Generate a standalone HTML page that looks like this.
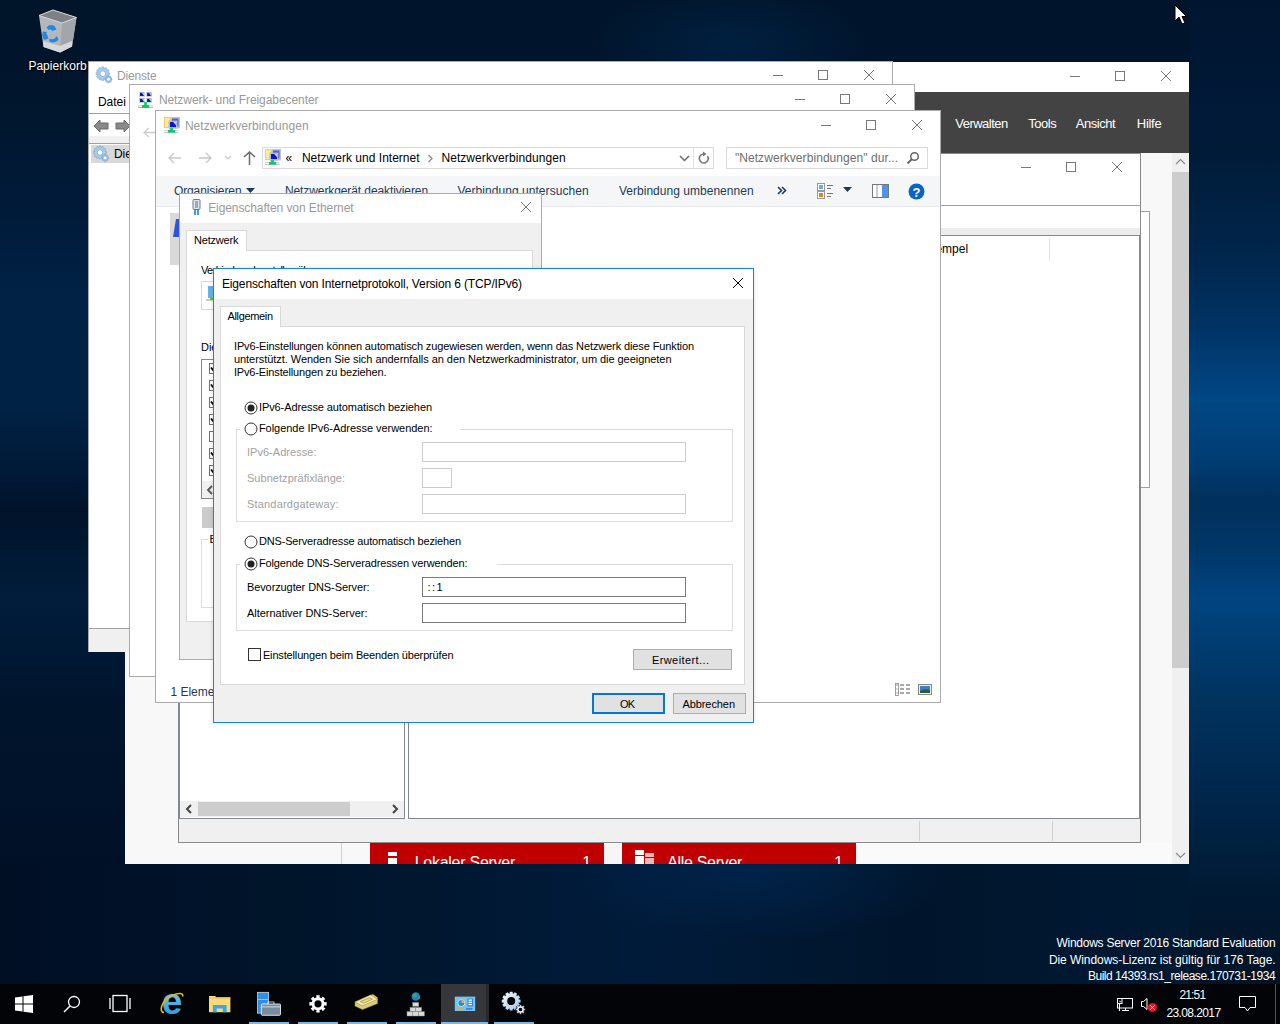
<!DOCTYPE html>
<html><head><meta charset="utf-8"><style>
html,body{margin:0;padding:0;width:1280px;height:1024px;overflow:hidden;}
body{position:relative;font-family:"Liberation Sans",sans-serif;}
body div, body span.t, body svg{position:absolute;box-sizing:border-box;}
span.t{white-space:nowrap;line-height:1;}

</style></head><body>
<div style="left:0;top:0;width:1280px;height:1024px;background:radial-gradient(ellipse 140px 60px at 730px 45px, rgba(0,34,68,0.85), rgba(0,34,68,0) 100%),#00152b"></div>
<div style="left:0;top:0;width:125px;height:984px;background:linear-gradient(180deg,#00142a 0px,#00162d 100px,#001a38 200px,#012246 300px,#002244 410px,#001a38 470px,#00132a 510px,#001d3c 600px,#00152d 700px,#001128 850px,#000d20 950px,#000d20 984px)"></div>
<div style="left:1189px;top:0;width:91px;height:984px;background:linear-gradient(180deg,#001530 0px,#001b39 150px,#00254a 250px,#003466 330px,#004886 400px,#003d73 460px,#00305c 500px,#003565 540px,#00447f 600px,#00335f 700px,#00274d 790px,#001a33 890px,#001428 984px)"></div>
<div style="left:0px;top:864px;width:1189px;height:120px;background:radial-gradient(ellipse 200px 70px at 750px 8px, rgba(0,36,76,0.9), rgba(0,36,76,0) 100%),linear-gradient(90deg,#000f24 0px,#001128 125px,#00152b 310px,#001b3a 640px,#00152b 910px,#001832 1100px,#001a33 1189px)"></div>
<svg style="left:36px;top:8px" width="44" height="46" viewBox="0 0 44 46">
<path d="M3 7.5 L7.5 39 L24 44.5 L36 38.5 L40.5 9.5 L26 15 Z" fill="#b4b8bc"/>
<path d="M26 15 L24 44.5 L36 38.5 L40.5 9.5 Z" fill="#a2a6aa"/>
<path d="M7 33 L24 38 L36 33 L36 38.5 L24 44.5 L7.5 39 Z" fill="#d6d8da"/>
<path d="M3 7.5 L17 2 L40.5 9.5 L26 15 Z" fill="#7d8185" stroke="#d8dcdf" stroke-width="1"/>
<path d="M10.5 19.5 q3.5 -4 8 -1.5 l2 3.5 l-4 1.5 q-1.5 -2.5 -3.5 -1 z M7 23.5 q-2 5 1.5 8.5 l4 -1.5 l-1.5 -4 q-1 -1 0 -2.5 z M13.5 33.5 q5 2.5 9 -1.5 l-1.5 -4 l-2.5 2.5 q-2.5 1.5 -5 0 z" fill="#1e88e5"/>
</svg>
<span class="t" style="left:28.40px;top:60.28px;font-size:12px;color:#fff;letter-spacing:0.019px;text-shadow:0 0 2px #000,1px 1px 1px #000;">Papierkorb</span>
<span class="t" style="left:1056.40px;top:937.28px;font-size:12px;color:#fff;letter-spacing:-0.253px;">Windows Server 2016 Standard Evaluation</span>
<span class="t" style="left:1048.90px;top:954.28px;font-size:12px;color:#fff;letter-spacing:-0.060px;">Die Windows-Lizenz ist gültig für 176 Tage.</span>
<span class="t" style="left:1087.90px;top:970.28px;font-size:12px;color:#fff;letter-spacing:-0.465px;">Build 14393.rs1_release.170731-1934</span>
<div style="left:0;top:0;width:1280px;height:864px;overflow:hidden">
<div style="left:125px;top:62px;width:1064px;height:802px;background:#f8f8f8;"></div>
<div style="left:125px;top:62px;width:1064px;height:30px;background:#fff;"></div>
<div style="left:1070px;top:76px;width:10px;height:1px;background:#777;"></div>
<div style="left:1115px;top:71px;width:10px;height:10px;border:1px solid #777;"></div>
<svg style="left:1160.0px;top:70.0px" width="12" height="12"><path d="M1 1 L11 11 M11 1 L1 11" stroke="#777" stroke-width="1"/></svg>
<div style="left:125px;top:92px;width:1064px;height:61px;background:#434343;"></div>
<span class="t" style="left:955.35px;top:117.02px;font-size:13px;color:#fff;letter-spacing:-0.537px;">Verwalten</span>
<span class="t" style="left:1028.35px;top:117.02px;font-size:13px;color:#fff;letter-spacing:-0.515px;">Tools</span>
<span class="t" style="left:1075.85px;top:117.02px;font-size:13px;color:#fff;letter-spacing:-0.473px;">Ansicht</span>
<span class="t" style="left:1136.85px;top:117.02px;font-size:13px;color:#fff;letter-spacing:-0.304px;">Hilfe</span>
<div style="left:1172px;top:153px;width:17px;height:711px;background:#f0f0f0;"></div>
<div style="left:1172px;top:172px;width:17px;height:496px;background:#cdcdcd;"></div>
<svg style="left:1175px;top:158px" width="11" height="8"><path d="M1 6 L5.5 1.5 L10 6" stroke="#888" fill="none" stroke-width="1.2"/></svg>
<svg style="left:1175px;top:851px" width="11" height="8"><path d="M1 2 L5.5 6.5 L10 2" stroke="#888" fill="none" stroke-width="1.2"/></svg>
<div style="left:1100px;top:211px;width:50px;height:277px;background:#fff;border:1px solid #a0a0a0;"></div>
<div style="left:341px;top:842px;width:1px;height:22px;background:#d0d0d0;"></div>
<div style="left:603px;top:842px;width:19px;height:22px;background:#f6f6f6;"></div>
<div style="left:855px;top:842px;width:317px;height:22px;background:#fafafa;"></div>
<div style="left:370px;top:842px;width:233.5px;height:22px;background:#c00000;"></div>
<div style="left:622px;top:842px;width:233.5px;height:22px;background:#c00000;"></div>
<div style="left:388px;top:852px;width:9px;height:4px;background:#fff;"></div>
<div style="left:388px;top:858px;width:9px;height:6px;background:#fff;"></div>
<div style="left:635px;top:850px;width:9px;height:5px;background:#fff;"></div>
<div style="left:635px;top:856px;width:9px;height:8px;background:#fff;"></div>
<div style="left:645px;top:853px;width:9px;height:4px;background:#f4b5b5;"></div>
<div style="left:645px;top:858px;width:9px;height:6px;background:#f4b5b5;"></div>
<span class="t" style="left:414.70px;top:855.04px;font-size:16px;color:#fff;letter-spacing:-0.265px;">Lokaler Server</span>
<span class="t" style="left:582.20px;top:855.04px;font-size:16px;color:#fff;">1</span>
<span class="t" style="left:667.20px;top:855.04px;font-size:16px;color:#fff;letter-spacing:-0.315px;">Alle Server</span>
<span class="t" style="left:834.20px;top:855.04px;font-size:16px;color:#fff;">1</span>
</div>
<div style="left:178px;top:153px;width:963px;height:690px;background:#fff;border:1px solid #8a8a8a;"></div>
<div style="left:1021px;top:167px;width:10px;height:1px;background:#777;"></div>
<div style="left:1066px;top:162px;width:10px;height:10px;border:1px solid #777;"></div>
<svg style="left:1111.0px;top:161.0px" width="12" height="12"><path d="M1 1 L11 11 M11 1 L1 11" stroke="#777" stroke-width="1"/></svg>
<div style="left:178px;top:205px;width:963px;height:1px;background:#a0a0a0;"></div>
<div style="left:179px;top:228px;width:961px;height:7px;background:#ececec;"></div>
<div style="left:178px;top:235px;width:227px;height:584px;background:#fff;border:1px solid #828790;border-left-width:2px;"></div>
<div style="left:180px;top:801px;width:224px;height:16px;background:#f0f0f0;"></div>
<div style="left:198px;top:802px;width:152px;height:14px;background:#cdcdcd;"></div>
<svg style="left:185px;top:804px" width="8" height="10"><path d="M6 1 L2 5 L6 9" stroke="#444" fill="none" stroke-width="2"/></svg>
<svg style="left:391px;top:804px" width="8" height="10"><path d="M2 1 L6 5 L2 9" stroke="#444" fill="none" stroke-width="2"/></svg>
<div style="left:408px;top:235px;width:732px;height:584px;background:#fff;border:1px solid #828790;"></div>
<div style="left:1049px;top:238px;width:1px;height:23px;background:#e5e5e5;"></div>
<span class="t" style="left:921.40px;top:243.28px;font-size:12px;color:#000;">Exempel</span>
<div style="left:179px;top:819px;width:961px;height:23px;background:#f0f0f0;"></div>
<div style="left:919px;top:821px;width:1px;height:20px;background:#d0d0d0;"></div>
<div style="left:1052px;top:821px;width:1px;height:20px;background:#d0d0d0;"></div>
<div style="left:88px;top:61px;width:805px;height:591px;background:#fff;border:1px solid #aaaaaa;"></div>
<span class="t" style="left:116.90px;top:69.78px;font-size:12px;color:#999;letter-spacing:-0.165px;">Dienste</span>
<div style="left:773px;top:75px;width:10px;height:1px;background:#777;"></div>
<div style="left:818px;top:70px;width:10px;height:10px;border:1px solid #777;"></div>
<svg style="left:863.0px;top:69.0px" width="12" height="12"><path d="M1 1 L11 11 M11 1 L1 11" stroke="#777" stroke-width="1"/></svg>
<span class="t" style="left:97.90px;top:95.78px;font-size:12px;color:#000;">Datei</span>
<div style="left:89px;top:113px;width:803px;height:1px;background:#a0a0a0;"></div>
<div style="left:89px;top:136px;width:803px;height:7px;background:#f0f0f0;"></div>
<div style="left:89px;top:143px;width:803px;height:1px;background:#a0a0a0;"></div>
<div style="left:91px;top:145px;width:39px;height:18px;background:#d9d9d9;"></div>
<span class="t" style="left:113.90px;top:148.28px;font-size:12px;color:#000;">Dienste</span>
<svg style="left:91px;top:143px" width="20" height="21" viewBox="91 143 20 21"><path d="M105.01 151.31 L106.53 151.55 L106.53 153.45 L105.01 153.69 L104.93 153.98 L106.13 154.95 L105.18 156.59 L103.74 156.03 L103.53 156.24 L104.09 157.68 L102.45 158.63 L101.48 157.43 L101.19 157.51 L100.95 159.03 L99.05 159.03 L98.81 157.51 L98.52 157.43 L97.55 158.63 L95.91 157.68 L96.47 156.24 L96.26 156.03 L94.82 156.59 L93.87 154.95 L95.07 153.98 L94.99 153.69 L93.47 153.45 L93.47 151.55 L94.99 151.31 L95.07 151.02 L93.87 150.05 L94.82 148.41 L96.26 148.97 L96.47 148.76 L95.91 147.32 L97.55 146.37 L98.52 147.57 L98.81 147.49 L99.05 145.97 L100.95 145.97 L101.19 147.49 L101.48 147.57 L102.45 146.37 L104.09 147.32 L103.53 148.76 L103.74 148.97 L105.18 148.41 L106.13 150.05 L104.93 151.02 Z" fill="#a9cdea" stroke="#6a9cc8" stroke-width="0.5"/><circle cx="100" cy="152.5" r="2.772" fill="#fff" stroke="#7aa6cc" stroke-width="0.8"/><path d="M107.63 157.00 L108.73 157.20 L108.73 158.60 L107.63 158.80 L107.55 158.99 L108.19 159.90 L107.20 160.89 L106.29 160.25 L106.10 160.33 L105.90 161.43 L104.50 161.43 L104.30 160.33 L104.11 160.25 L103.20 160.89 L102.21 159.90 L102.85 158.99 L102.77 158.80 L101.67 158.60 L101.67 157.20 L102.77 157.00 L102.85 156.81 L102.21 155.90 L103.20 154.91 L104.11 155.55 L104.30 155.47 L104.50 154.37 L105.90 154.37 L106.10 155.47 L106.29 155.55 L107.20 154.91 L108.19 155.90 L107.55 156.81 Z" fill="#9cc2e6" stroke="#6a9cc8" stroke-width="0.5"/><circle cx="105.2" cy="157.9" r="1.368" fill="#fff"/></svg>
<div style="left:89px;top:628px;width:803px;height:24px;background:#f0f0f0;"></div>
<div style="left:89px;top:628px;width:803px;height:1px;background:#a0a0a0;"></div>
<svg style="left:93px;top:119px" width="16" height="14"><path d="M1 7 L7 1 L7 4 L15 4 L15 10 L7 10 L7 13 Z" fill="#8a8a8a" stroke="#6a6a6a"/></svg>
<svg style="left:115px;top:119px" width="16" height="14"><path d="M15 7 L9 1 L9 4 L1 4 L1 10 L9 10 L9 13 Z" fill="#8a8a8a" stroke="#6a6a6a"/></svg>
<svg style="left:94px;top:64px" width="21" height="21" viewBox="94 64 21 21"><path d="M107.96 72.48 L109.53 72.72 L109.53 74.68 L107.96 74.92 L107.88 75.22 L109.12 76.22 L108.14 77.91 L106.66 77.34 L106.44 77.56 L107.01 79.04 L105.32 80.02 L104.32 78.78 L104.02 78.86 L103.78 80.43 L101.82 80.43 L101.58 78.86 L101.28 78.78 L100.28 80.02 L98.59 79.04 L99.16 77.56 L98.94 77.34 L97.46 77.91 L96.48 76.22 L97.72 75.22 L97.64 74.92 L96.07 74.68 L96.07 72.72 L97.64 72.48 L97.72 72.18 L96.48 71.18 L97.46 69.49 L98.94 70.06 L99.16 69.84 L98.59 68.36 L100.28 67.38 L101.28 68.62 L101.58 68.54 L101.82 66.97 L103.78 66.97 L104.02 68.54 L104.32 68.62 L105.32 67.38 L107.01 68.36 L106.44 69.84 L106.66 70.06 L108.14 69.49 L109.12 71.18 L107.88 72.18 Z" fill="#a9cdea" stroke="#6a9cc8" stroke-width="0.5"/><circle cx="102.8" cy="73.7" r="2.856" fill="#fff" stroke="#7aa6cc" stroke-width="0.8"/><path d="M110.93 78.40 L112.03 78.60 L112.03 80.00 L110.93 80.20 L110.85 80.39 L111.49 81.30 L110.50 82.29 L109.59 81.65 L109.40 81.73 L109.20 82.83 L107.80 82.83 L107.60 81.73 L107.41 81.65 L106.50 82.29 L105.51 81.30 L106.15 80.39 L106.07 80.20 L104.97 80.00 L104.97 78.60 L106.07 78.40 L106.15 78.21 L105.51 77.30 L106.50 76.31 L107.41 76.95 L107.60 76.87 L107.80 75.77 L109.20 75.77 L109.40 76.87 L109.59 76.95 L110.50 76.31 L111.49 77.30 L110.85 78.21 Z" fill="#9cc2e6" stroke="#6a9cc8" stroke-width="0.5"/><circle cx="108.5" cy="79.3" r="1.368" fill="#fff"/></svg>
<div style="left:129px;top:84px;width:786px;height:593px;background:#fff;border:1px solid #aaaaaa;"></div>
<span class="t" style="left:158.90px;top:93.78px;font-size:12px;color:#999;letter-spacing:-0.064px;">Netzwerk- und Freigabecenter</span>
<div style="left:795px;top:99px;width:10px;height:1px;background:#777;"></div>
<div style="left:840px;top:94px;width:10px;height:10px;border:1px solid #777;"></div>
<svg style="left:885.0px;top:93.0px" width="12" height="12"><path d="M1 1 L11 11 M11 1 L1 11" stroke="#777" stroke-width="1"/></svg>
<svg style="left:138px;top:91px" width="16" height="18" viewBox="138 90 16 18"><rect x="139.2" y="91" width="5.6" height="4.8" fill="#c8ccc8"/><rect x="140.0" y="91.8" width="4" height="3.2" fill="#0a10d0"/><path d="M141.79999999999998 91.8 L144.0 91.8 L144.0 95 Z" fill="#b8c8f8"/><rect x="146.3" y="91" width="5.6" height="4.8" fill="#c8ccc8"/><rect x="147.10000000000002" y="91.8" width="4" height="3.2" fill="#0a10d0"/><path d="M148.9 91.8 L151.10000000000002 91.8 L151.10000000000002 95 Z" fill="#b8c8f8"/><rect x="139.2" y="97" width="5.6" height="4.8" fill="#c8ccc8"/><rect x="140.0" y="97.8" width="4" height="3.2" fill="#0a10d0"/><path d="M141.79999999999998 97.8 L144.0 97.8 L144.0 101 Z" fill="#b8c8f8"/><rect x="146.3" y="97" width="5.6" height="4.8" fill="#c8ccc8"/><rect x="147.10000000000002" y="97.8" width="4" height="3.2" fill="#0a10d0"/><path d="M148.9 97.8 L151.10000000000002 97.8 L151.10000000000002 101 Z" fill="#b8c8f8"/><rect x="138" y="104.3" width="15" height="0.9" fill="#c0c4c8"/><rect x="138" y="106" width="15" height="1" fill="#b0b4b8"/><rect x="144.1" y="100.9" width="2.8" height="3.4" fill="#10d070"/><rect x="142" y="104" width="7" height="3" fill="#10c868"/></svg>
<svg style="left:143px;top:127px" width="13" height="11"><path d="M6 1 L1 5.5 L6 10 M1 5.5 L13 5.5" stroke="#ccc" fill="none" stroke-width="1.3"/></svg>
<div style="left:155px;top:110px;width:786px;height:593px;background:#fff;border:1px solid #aaaaaa;"></div>
<svg style="left:164px;top:116px" width="17" height="17" viewBox="164 116 17 17"><rect x="164" y="117" width="7" height="11" fill="#f0cf63"/><rect x="165" y="118" width="5" height="9" fill="#fbe9a0"/><rect x="171" y="117" width="9" height="11.4" fill="#c0c4c0"/><rect x="172" y="118.5" width="6.5" height="8" fill="#5060e0"/><rect x="168.9" y="120.9" width="8.2" height="7.3" fill="#e8ece8" stroke="#a0a4a0" stroke-width="0.5"/><rect x="169.8" y="121.8" width="6.4" height="5.5" fill="#0a14d8"/><path d="M173 121.8 L176.2 121.8 L176.2 125.5 Z" fill="#c0d0f8"/><rect x="164" y="130.2" width="14.7" height="0.7" fill="#c0c4c8"/><rect x="164" y="132" width="14.7" height="0.8" fill="#b0b4b8"/><rect x="169.8" y="128.2" width="3.3" height="2.2" fill="#10c868"/><rect x="168" y="130" width="7.2" height="2.6" fill="#10c868"/></svg>
<span class="t" style="left:184.90px;top:120.28px;font-size:12px;color:#999;letter-spacing:0.050px;">Netzwerkverbindungen</span>
<div style="left:821px;top:125px;width:10px;height:1px;background:#777;"></div>
<div style="left:866px;top:120px;width:10px;height:10px;border:1px solid #777;"></div>
<svg style="left:911.0px;top:119.0px" width="12" height="12"><path d="M1 1 L11 11 M11 1 L1 11" stroke="#777" stroke-width="1"/></svg>
<svg style="left:168px;top:152px" width="14" height="12"><path d="M6 1 L1 6 L6 11 M1 6 L13 6" stroke="#c8c8c8" fill="none" stroke-width="1.3"/></svg>
<svg style="left:198px;top:152px" width="14" height="12"><path d="M8 1 L13 6 L8 11 M1 6 L13 6" stroke="#c8c8c8" fill="none" stroke-width="1.3"/></svg>
<svg style="left:224px;top:155px" width="8" height="6"><path d="M1 1 L4 4 L7 1" stroke="#c8c8c8" fill="none" stroke-width="1.2"/></svg>
<svg style="left:243px;top:151px" width="13" height="14"><path d="M1 6 L6.5 1 L12 6 M6.5 1 L6.5 14" stroke="#6a6a6a" fill="none" stroke-width="1.5"/></svg>
<div style="left:262px;top:147px;width:452px;height:22px;background:#fff;border:1px solid #d9d9d9;"></div>
<div style="left:693px;top:148px;width:1px;height:20px;background:#e3e3e3;"></div>
<svg style="left:265px;top:148px" width="17" height="17" viewBox="164 116 17 17"><rect x="164" y="117" width="7" height="11" fill="#f0cf63"/><rect x="165" y="118" width="5" height="9" fill="#fbe9a0"/><rect x="171" y="117" width="9" height="11.4" fill="#c0c4c0"/><rect x="172" y="118.5" width="6.5" height="8" fill="#5060e0"/><rect x="168.9" y="120.9" width="8.2" height="7.3" fill="#e8ece8" stroke="#a0a4a0" stroke-width="0.5"/><rect x="169.8" y="121.8" width="6.4" height="5.5" fill="#0a14d8"/><path d="M173 121.8 L176.2 121.8 L176.2 125.5 Z" fill="#c0d0f8"/><rect x="164" y="130.2" width="14.7" height="0.7" fill="#c0c4c8"/><rect x="164" y="132" width="14.7" height="0.8" fill="#b0b4b8"/><rect x="169.8" y="128.2" width="3.3" height="2.2" fill="#10c868"/><rect x="168" y="130" width="7.2" height="2.6" fill="#10c868"/></svg>
<span class="t" style="left:285.40px;top:152.28px;font-size:12px;color:#000;">«</span>
<span class="t" style="left:301.90px;top:152.28px;font-size:12px;color:#000;letter-spacing:0.015px;">Netzwerk und Internet</span>
<svg style="left:427px;top:154px" width="7" height="9"><path d="M1.5 1 L5 4.5 L1.5 8" stroke="#888" fill="none" stroke-width="1.3"/></svg>
<span class="t" style="left:441.40px;top:152.28px;font-size:12px;color:#000;letter-spacing:0.076px;">Netzwerkverbindungen</span>
<svg style="left:679px;top:155px" width="11" height="7"><path d="M1 1 L5.5 5.5 L10 1" stroke="#6a6a6a" fill="none" stroke-width="1.5"/></svg>
<svg style="left:698px;top:151px" width="12" height="14" viewBox="0 0 12 14"><path d="M9.5 5 A4.5 4.5 0 1 1 6 3" stroke="#777" fill="none" stroke-width="1.6"/><path d="M5 0.5 L8.5 3 L5 5.5 Z" fill="#777"/></svg>
<div style="left:726px;top:147px;width:202px;height:22px;background:#fff;border:1px solid #d9d9d9;"></div>
<span class="t" style="left:734.90px;top:152.28px;font-size:12px;color:#6d6d6d;letter-spacing:0.069px;">&quot;Netzwerkverbindungen&quot; dur...</span>
<svg style="left:906px;top:151px" width="14" height="14"><circle cx="8.5" cy="5.5" r="3.8" stroke="#666" fill="none" stroke-width="1.5"/><path d="M6 8 L1.5 12.5" stroke="#666" stroke-width="2"/></svg>
<div style="left:156px;top:176px;width:784px;height:30px;background:#f5f6f8;"></div>
<div style="left:156px;top:206px;width:784px;height:1px;background:#e8e9ea;"></div>
<span class="t" style="left:173.90px;top:185.28px;font-size:12px;color:#1e395b;letter-spacing:-0.091px;">Organisieren</span>
<svg style="left:246px;top:188px" width="9" height="6"><path d="M0 0 L9 0 L4.5 5 Z" fill="#1e395b"/></svg>
<span class="t" style="left:284.90px;top:185.28px;font-size:12px;color:#1e395b;letter-spacing:-0.088px;">Netzwerkgerät deaktivieren</span>
<span class="t" style="left:457.40px;top:185.28px;font-size:12px;color:#1e395b;letter-spacing:0.052px;">Verbindung untersuchen</span>
<span class="t" style="left:618.90px;top:185.28px;font-size:12px;color:#1e395b;letter-spacing:0.029px;">Verbindung umbenennen</span>
<svg style="left:777px;top:186px" width="10" height="9"><path d="M1 1 L4.5 4.5 L1 8 M5 1 L8.5 4.5 L5 8" stroke="#1e395b" fill="none" stroke-width="1.6"/></svg>
<svg style="left:817px;top:183px" width="17" height="16" viewBox="0 0 17 16"><rect x="0.5" y="0.5" width="7" height="7" fill="#fff" stroke="#999"/><rect x="2" y="2" width="4" height="4" fill="#6fa8dc"/><rect x="0.5" y="8.5" width="7" height="7" fill="#fff" stroke="#999"/><rect x="2" y="10" width="4" height="4" fill="#d9822b"/><rect x="10" y="2" width="6" height="1" fill="#777"/><rect x="10" y="5" width="4" height="1" fill="#777"/><rect x="10" y="10" width="6" height="1" fill="#777"/><rect x="10" y="13" width="4" height="1" fill="#777"/></svg>
<svg style="left:843px;top:187px" width="9" height="6"><path d="M0 0 L9 0 L4.5 5 Z" fill="#1e395b"/></svg>
<svg style="left:872px;top:184px" width="17" height="14" viewBox="0 0 17 14"><rect x="0.5" y="0.5" width="16" height="13" fill="#fff" stroke="#777"/><rect x="4.5" y="1" width="1" height="12" fill="#999"/><rect x="10" y="1" width="6" height="12" fill="#4a98e0"/></svg>
<svg style="left:908px;top:183px" width="17" height="17"><circle cx="8.5" cy="8.5" r="8" fill="#0a63c9"/><text x="8.5" y="13.5" text-anchor="middle" font-family="Liberation Sans" font-weight="bold" font-size="13" fill="#fff">?</text></svg>
<div style="left:170px;top:213px;width:10px;height:52px;background:#d9d9d9;"></div>
<svg style="left:172px;top:218px" width="8" height="20"><path d="M4 1 L8 1 L8 19 L1 19 Z" fill="#2b54d8"/></svg>
<span class="t" style="left:170.40px;top:685.78px;font-size:12px;color:#1e395b;">1 Element</span>
<svg style="left:895px;top:683px" width="17" height="13" viewBox="0 0 17 13"><rect x="0.5" y="0.5" width="3" height="12" fill="#fff" stroke="#888" stroke-width="0.8"/><rect x="1.5" y="1.5" width="1" height="1" fill="#333"/><rect x="1.5" y="5.5" width="1" height="1" fill="#2a7ad0"/><rect x="1.5" y="9.5" width="1" height="1" fill="#d03020"/><rect x="5" y="1.5" width="4" height="1" fill="#555"/><rect x="11" y="1.5" width="4" height="1" fill="#555"/><rect x="5" y="5.5" width="4" height="1" fill="#555"/><rect x="11" y="5.5" width="4" height="1" fill="#555"/><rect x="5" y="9.5" width="4" height="1" fill="#555"/><rect x="11" y="9.5" width="4" height="1" fill="#555"/></svg>
<svg style="left:918px;top:684px" width="14" height="11" viewBox="0 0 14 11"><rect x="0.5" y="0.5" width="13" height="10" fill="#eee" stroke="#888"/><rect x="2" y="2" width="10" height="7" fill="#3f7fc7"/><path d="M2 7 Q6 4 12 6 L12 9 L2 9 Z" fill="#2f5a3a"/></svg>
<div style="left:179px;top:193px;width:363px;height:467px;background:#f0f0f0;border:1px solid #aaaaaa;"></div>
<div style="left:180px;top:194px;width:361px;height:29px;background:#fff;"></div>
<svg style="left:192px;top:199px" width="9" height="16" viewBox="0 0 9 16"><rect x="1" y="0.5" width="7" height="10" rx="1" fill="#dfe6ee" stroke="#6a7a8a"/><rect x="3" y="2" width="3" height="7" fill="#9ab"/><rect x="2" y="11" width="2" height="5" fill="#3aa0e0"/><rect x="5" y="11" width="2" height="5" fill="#3aa0e0"/></svg>
<span class="t" style="left:208.15px;top:201.78px;font-size:12px;color:#999;letter-spacing:-0.079px;">Eigenschaften von Ethernet</span>
<svg style="left:520.0px;top:201.0px" width="12" height="12"><path d="M1 1 L11 11 M11 1 L1 11" stroke="#777" stroke-width="1"/></svg>
<div style="left:186px;top:250px;width:347px;height:372px;background:#fff;border:1px solid #d9d9d9;"></div>
<div style="left:186px;top:230px;width:61px;height:21px;background:#fff;border:1px solid #d9d9d9;border-bottom:none;"></div>
<span class="t" style="left:193.95px;top:235.34px;font-size:11px;color:#000;letter-spacing:-0.178px;">Netzwerk</span>
<span class="t" style="left:200.95px;top:264.84px;font-size:11px;color:#000;letter-spacing:-0.575px;">Verbindung herstellen über:</span>
<div style="left:201px;top:281px;width:319px;height:29px;background:#fff;border:1px solid #d9d9d9;"></div>
<svg style="left:206px;top:285px" width="12" height="18"><rect x="2" y="1" width="8" height="12" fill="#62b4ea"/><rect x="0" y="14" width="12" height="2" fill="#ccc"/><rect x="4" y="13" width="4" height="2" fill="#4c4"/></svg>
<span class="t" style="left:200.95px;top:341.84px;font-size:11px;color:#000;">Diese Verbindung verwendet folgende Elemente:</span>
<div style="left:201px;top:359px;width:319px;height:140px;background:#fff;border:1px solid #828790;"></div>
<div style="left:209px;top:363px;width:13px;height:11px;background:#fff;border:1px solid #707070;"></div>
<svg style="left:209px;top:363px" width="13" height="11" viewBox="209 363 13 11"><path d="M211 367.5 L213.3 370.5 L219 365" stroke="#000" fill="none" stroke-width="1.8"/></svg>
<div style="left:209px;top:380px;width:13px;height:11px;background:#fff;border:1px solid #707070;"></div>
<svg style="left:209px;top:380px" width="13" height="11" viewBox="209 380 13 11"><path d="M211 384.5 L213.3 387.5 L219 382" stroke="#000" fill="none" stroke-width="1.8"/></svg>
<div style="left:209px;top:397px;width:13px;height:11px;background:#fff;border:1px solid #707070;"></div>
<svg style="left:209px;top:397px" width="13" height="11" viewBox="209 397 13 11"><path d="M211 401.5 L213.3 404.5 L219 399" stroke="#000" fill="none" stroke-width="1.8"/></svg>
<div style="left:209px;top:414px;width:13px;height:11px;background:#fff;border:1px solid #707070;"></div>
<svg style="left:209px;top:414px" width="13" height="11" viewBox="209 414 13 11"><path d="M211 418.5 L213.3 421.5 L219 416" stroke="#000" fill="none" stroke-width="1.8"/></svg>
<div style="left:209px;top:431px;width:13px;height:11px;background:#fff;border:1px solid #707070;"></div>
<div style="left:209px;top:448px;width:13px;height:11px;background:#fff;border:1px solid #707070;"></div>
<svg style="left:209px;top:448px" width="13" height="11" viewBox="209 448 13 11"><path d="M211 452.5 L213.3 455.5 L219 450" stroke="#000" fill="none" stroke-width="1.8"/></svg>
<div style="left:209px;top:465px;width:13px;height:11px;background:#fff;border:1px solid #707070;"></div>
<svg style="left:209px;top:465px" width="13" height="11" viewBox="209 465 13 11"><path d="M211 469.5 L213.3 472.5 L219 467" stroke="#000" fill="none" stroke-width="1.8"/></svg>
<div style="left:202px;top:481px;width:317px;height:17px;background:#f0f0f0;"></div>
<svg style="left:206px;top:485px" width="8" height="10"><path d="M6 1 L2 5 L6 9" stroke="#555" fill="none" stroke-width="1.8"/></svg>
<div style="left:202px;top:507px;width:78px;height:21px;background:#cccccc;"></div>
<div style="left:201px;top:539px;width:319px;height:69px;border:1px solid #dcdcdc;"></div>
<span class="t" style="left:208.45px;top:533.84px;font-size:11px;color:#000;background:#fff;padding:0 1px;">Beschreibung</span>
<div style="left:213px;top:268px;width:541px;height:455px;background:#f0f0f0;border:1px solid #1883d7;box-shadow:0 0 5px rgba(0,0,0,0.12);"></div>
<div style="left:214px;top:269px;width:539px;height:30px;background:#fff;"></div>
<span class="t" style="left:221.90px;top:278.28px;font-size:12px;color:#000;letter-spacing:-0.130px;">Eigenschaften von Internetprotokoll, Version 6 (TCP/IPv6)</span>
<svg style="left:732.0px;top:277.0px" width="12" height="12"><path d="M1 1 L11 11 M11 1 L1 11" stroke="#000" stroke-width="1"/></svg>
<div style="left:220px;top:326px;width:525px;height:359px;background:#fff;border:1px solid #d9d9d9;"></div>
<div style="left:220px;top:306px;width:61px;height:21px;background:#fff;border:1px solid #d9d9d9;border-bottom:none;"></div>
<span class="t" style="left:227.45px;top:311.34px;font-size:11px;color:#000;letter-spacing:-0.339px;">Allgemein</span>
<span class="t" style="left:233.95px;top:340.84px;font-size:11px;color:#000;letter-spacing:-0.115px;">IPv6-Einstellungen können automatisch zugewiesen werden, wenn das Netzwerk diese Funktion</span>
<span class="t" style="left:233.95px;top:353.84px;font-size:11px;color:#000;letter-spacing:-0.049px;">unterstützt. Wenden Sie sich andernfalls an den Netzwerkadministrator, um die geeigneten</span>
<span class="t" style="left:233.95px;top:366.84px;font-size:11px;color:#000;letter-spacing:-0.152px;">IPv6-Einstellungen zu beziehen.</span>
<div style="left:235.5px;top:428.5px;width:497.5px;height:93.5px;border:1px solid #dcdcdc;"></div>
<div style="left:240px;top:420px;width:220px;height:16px;background:#fff;"></div>
<svg style="left:243.5px;top:400.5px" width="14" height="14"><circle cx="7" cy="7" r="6" fill="#fff" stroke="#333" stroke-width="1"/><circle cx="7" cy="7" r="3.5" fill="#222"/></svg>
<span class="t" style="left:258.95px;top:402.34px;font-size:11px;color:#000;letter-spacing:-0.094px;">IPv6-Adresse automatisch beziehen</span>
<svg style="left:243.5px;top:421.5px" width="14" height="14"><circle cx="7" cy="7" r="6" fill="#fff" stroke="#333" stroke-width="1"/></svg>
<span class="t" style="left:258.95px;top:423.34px;font-size:11px;color:#000;letter-spacing:-0.042px;">Folgende IPv6-Adresse verwenden:</span>
<span class="t" style="left:246.95px;top:446.84px;font-size:11px;color:#a0a0a0;letter-spacing:0.042px;">IPv6-Adresse:</span>
<span class="t" style="left:246.95px;top:473.34px;font-size:11px;color:#a0a0a0;letter-spacing:0.048px;">Subnetzpräfixlänge:</span>
<span class="t" style="left:246.95px;top:499.34px;font-size:11px;color:#a0a0a0;letter-spacing:0.195px;">Standardgateway:</span>
<div style="left:422px;top:442px;width:264px;height:20px;background:#fff;border:1px solid #cccccc;"></div>
<div style="left:422px;top:468px;width:30px;height:20px;background:#fff;border:1px solid #cccccc;"></div>
<div style="left:422px;top:494px;width:264px;height:20px;background:#fff;border:1px solid #cccccc;"></div>
<svg style="left:243.5px;top:534.5px" width="14" height="14"><circle cx="7" cy="7" r="6" fill="#fff" stroke="#333" stroke-width="1"/></svg>
<span class="t" style="left:258.95px;top:536.34px;font-size:11px;color:#000;letter-spacing:-0.173px;">DNS-Serveradresse automatisch beziehen</span>
<div style="left:235.5px;top:563.5px;width:497.5px;height:67.5px;border:1px solid #dcdcdc;"></div>
<div style="left:240px;top:555px;width:257px;height:16px;background:#fff;"></div>
<svg style="left:243.5px;top:556.5px" width="14" height="14"><circle cx="7" cy="7" r="6" fill="#fff" stroke="#333" stroke-width="1"/><circle cx="7" cy="7" r="3.5" fill="#222"/></svg>
<span class="t" style="left:258.95px;top:558.34px;font-size:11px;color:#000;letter-spacing:-0.129px;">Folgende DNS-Serveradressen verwenden:</span>
<span class="t" style="left:246.95px;top:582.34px;font-size:11px;color:#000;letter-spacing:-0.096px;">Bevorzugter DNS-Server:</span>
<span class="t" style="left:246.95px;top:608.34px;font-size:11px;color:#000;letter-spacing:-0.019px;">Alternativer DNS-Server:</span>
<div style="left:422px;top:577px;width:264px;height:20px;background:#fff;border:1px solid #7a7a7a;"></div>
<div style="left:422px;top:603px;width:264px;height:20px;background:#fff;border:1px solid #7a7a7a;"></div>
<span class="t" style="left:427.45px;top:582.34px;font-size:11px;color:#000;letter-spacing:1.433px;">::1</span>
<div style="left:248px;top:648px;width:13px;height:13px;background:#fff;border:1px solid #333;"></div>
<span class="t" style="left:262.95px;top:649.84px;font-size:11px;color:#000;letter-spacing:-0.159px;">Einstellungen beim Beenden überprüfen</span>
<div style="left:633px;top:649px;width:99px;height:21px;background:#e1e1e1;border:1px solid #adadad;"></div>
<span class="t" style="left:651.95px;top:654.84px;font-size:11px;color:#000;letter-spacing:0.411px;">Erweitert...</span>
<div style="left:592px;top:693px;width:73px;height:21px;background:#e1e1e1;border:1px solid #0078d7;border-width:2px;"></div>
<span class="t" style="left:619.95px;top:698.84px;font-size:11px;color:#000;letter-spacing:-0.806px;">OK</span>
<div style="left:673px;top:693px;width:73px;height:21px;background:#e1e1e1;border:1px solid #adadad;"></div>
<span class="t" style="left:682.45px;top:698.84px;font-size:11px;color:#000;letter-spacing:-0.077px;">Abbrechen</span>
<div style="left:0px;top:984px;width:1280px;height:40px;background:#020407;"></div>
<svg style="left:15px;top:995px" width="18" height="18" viewBox="0 0 18 18"><path d="M0 2.5 L7.5 1.4 L7.5 8.4 L0 8.4 Z M8.5 1.2 L18 0 L18 8.4 L8.5 8.4 Z M0 9.5 L7.5 9.5 L7.5 16.6 L0 15.5 Z M8.5 9.5 L18 9.5 L18 18 L8.5 16.8 Z" fill="#fff"/></svg>
<svg style="left:63px;top:995px" width="18" height="18"><circle cx="11" cy="7" r="5.5" stroke="#fff" fill="none" stroke-width="1.3"/><path d="M7 11 L1 17" stroke="#fff" stroke-width="1.5"/></svg>
<svg style="left:109px;top:994px" width="22" height="19"><rect x="4" y="1.5" width="14" height="16" stroke="#fff" fill="none" stroke-width="1.3"/><path d="M1 4 L1 15 M21 4 L21 15" stroke="#fff" stroke-width="1.3"/></svg>
<svg style="left:155px;top:988px" width="32" height="30" viewBox="155 988 32 30"><defs><linearGradient id="ieg" x1="0" y1="0" x2="0" y2="1"><stop offset="0" stop-color="#8adcfa"/><stop offset="1" stop-color="#1b8ed6"/></linearGradient></defs><text x="172" y="1013.5" text-anchor="middle" font-family="Liberation Sans" font-weight="bold" font-size="37" fill="url(#ieg)">e</text><path d="M164 1012.5 C158 1012 162 1000 172 995.5 C179 992.5 184 993 182.5 996.5" fill="none" stroke="#f2b600" stroke-width="1.6"/></svg>
<svg style="left:208px;top:994px" width="24" height="20" viewBox="208 994 24 20"><path d="M209 996 L215 996 L216.5 997.3 L230.4 997.3 L230.4 1012.3 L209 1012.3 Z" fill="#f8d978"/><rect x="209" y="997.5" width="21.4" height="1" fill="#e8c060"/><path d="M212.9 1005 L226.6 1005 L226.6 1012.3 L222.8 1012.3 L222.8 1008.4 L216.7 1008.4 L216.7 1012.3 L212.9 1012.3 Z" fill="#3ba7e8"/></svg>
<svg style="left:256px;top:991px" width="26" height="26" viewBox="256 991 26 26"><rect x="257.5" y="992.3" width="11.2" height="20.8" fill="#2f8fe0" stroke="#d8e8f6" stroke-width="0.7"/><rect x="258" y="999" width="10.2" height="0.8" fill="#a8d0f0"/><rect x="268" y="1002" width="6" height="2.5" fill="none" stroke="#e8eef4" stroke-width="0.8"/><rect x="261.3" y="1004" width="19.2" height="11.3" rx="1" fill="#7a8c9c" stroke="#e8eef4" stroke-width="0.9"/><rect x="262" y="1006.5" width="18" height="0.8" fill="#e8eef4"/></svg>
<svg style="left:307px;top:993px" width="22" height="22" viewBox="307 993 22 22"><path d="M326.61 1001.97 L326.61 1005.63 L324.44 1005.23 L323.57 1007.35 L325.38 1008.59 L322.79 1011.18 L321.55 1009.37 L319.43 1010.24 L319.83 1012.41 L316.17 1012.41 L316.57 1010.24 L314.45 1009.37 L313.21 1011.18 L310.62 1008.59 L312.43 1007.35 L311.56 1005.23 L309.39 1005.63 L309.39 1001.97 L311.56 1002.37 L312.43 1000.25 L310.62 999.01 L313.21 996.42 L314.45 998.23 L316.57 997.36 L316.17 995.19 L319.83 995.19 L319.43 997.36 L321.55 998.23 L322.79 996.42 L325.38 999.01 L323.57 1000.25 L324.44 1002.37 Z" fill="#fff"/><circle cx="318" cy="1003.8" r="3.6" fill="#020407"/></svg>
<svg style="left:353px;top:992px" width="27" height="20" viewBox="353 992 27 20"><path d="M355 1002 L362.5 1005.8 L377.5 999.3 L377.5 1003.6 L362.5 1009.6 L355 1006 Z" fill="#d9cc7c" stroke="#a89a48" stroke-width="0.5"/><path d="M355 1002 L370.5 995 L377.5 999.3 L362.5 1005.8 Z" fill="#f2eab0" stroke="#c8b860" stroke-width="0.5"/><path d="M359.5 1001.6 L369.5 997.2 L373.2 999.3 L363.5 1003.7 Z" fill="#b9a050"/><path d="M361.5 1001.8 L369.5 998.3 L371.2 999.3 L363.5 1002.8 Z" fill="#e8dc90"/><path d="M370.5 995 L373 994.3 L377.5 997.5 L377.5 999.3 Z" fill="#f5c84a"/></svg>
<svg style="left:405px;top:990px" width="22" height="28" viewBox="405 990 22 28"><circle cx="415.8" cy="996.5" r="4.3" fill="#1d7ae0"/><path d="M412.5 995 Q414 992.5 416.5 993.5 L417 996 L414.5 998.5 Z M417.5 998 L420 996.5 L419.5 999.5 Z" fill="#3cb043"/><rect x="412.7" y="1002.4" width="6.1" height="4" fill="#d8d8d8" stroke="#8a8a8a" stroke-width="0.4"/><rect x="410" y="1007.4" width="5.8" height="4" fill="#d8d8d8" stroke="#8a8a8a" stroke-width="0.4"/><rect x="415.8" y="1007.4" width="5.8" height="4" fill="#d8d8d8" stroke="#8a8a8a" stroke-width="0.4"/><rect x="407" y="1011.6" width="5.8" height="4.4" fill="#d8d8d8" stroke="#8a8a8a" stroke-width="0.4"/><rect x="412.8" y="1011.6" width="5.8" height="4.4" fill="#d8d8d8" stroke="#8a8a8a" stroke-width="0.4"/><rect x="418.6" y="1011.6" width="5.8" height="4.4" fill="#d8d8d8" stroke="#8a8a8a" stroke-width="0.4"/></svg>
<div style="left:441px;top:984px;width:44.5px;height:40px;background:#36373b;"></div>
<div style="left:485.5px;top:984px;width:3.5px;height:40px;background:#28292c;"></div>
<svg style="left:454px;top:996px" width="22" height="16" viewBox="454 996 22 16"><rect x="454.8" y="996.6" width="20.4" height="14.4" fill="#72c4f2"/><circle cx="461.3" cy="1003" r="3.6" fill="#e8f4fc"/><circle cx="461.3" cy="1003" r="3" fill="#2f86d6"/><path d="M461.3 1003 L461.3 1000 A3 3 0 0 1 464.3 1003 Z" fill="#f5a623"/><rect x="467.5" y="998.5" width="5.5" height="8" fill="#2f86d6"/><rect x="468.5" y="999.5" width="3.5" height="1.3" fill="#fff"/><rect x="468.5" y="1001.7" width="3.5" height="1.3" fill="#fff"/><rect x="468.5" y="1003.9" width="3.5" height="1.3" fill="#fff"/><rect x="457" y="1008.2" width="6.5" height="1.4" fill="#f5a623"/><rect x="466" y="1008.2" width="6.5" height="1.4" fill="#2f76c6"/></svg>
<svg style="left:498px;top:988px" width="30" height="28" viewBox="498 988 30 28"><defs><linearGradient id="g2" x1="0" y1="0" x2="1" y2="1"><stop offset="0" stop-color="#f4f8fc"/><stop offset="0.6" stop-color="#c8dcf0"/><stop offset="1" stop-color="#9cc0e8"/></linearGradient></defs><path d="M518.59 999.35 L520.60 999.74 L520.60 1002.46 L518.59 1002.85 L518.48 1003.28 L520.02 1004.62 L518.66 1006.98 L516.73 1006.32 L516.42 1006.63 L517.08 1008.56 L514.72 1009.92 L513.38 1008.38 L512.95 1008.49 L512.56 1010.50 L509.84 1010.50 L509.45 1008.49 L509.02 1008.38 L507.68 1009.92 L505.32 1008.56 L505.98 1006.63 L505.67 1006.32 L503.74 1006.98 L502.38 1004.62 L503.92 1003.28 L503.81 1002.85 L501.80 1002.46 L501.80 999.74 L503.81 999.35 L503.92 998.92 L502.38 997.58 L503.74 995.22 L505.67 995.88 L505.98 995.57 L505.32 993.64 L507.68 992.28 L509.02 993.82 L509.45 993.71 L509.84 991.70 L512.56 991.70 L512.95 993.71 L513.38 993.82 L514.72 992.28 L517.08 993.64 L516.42 995.57 L516.73 995.88 L518.66 995.22 L520.02 997.58 L518.48 998.92 Z" fill="url(#g2)"/><circle cx="511.2" cy="1001.1" r="4" fill="#020407"/><path d="M523.78 1008.29 L525.21 1008.56 L525.21 1010.44 L523.78 1010.71 L523.68 1010.97 L524.49 1012.17 L523.17 1013.49 L521.97 1012.68 L521.71 1012.78 L521.44 1014.21 L519.56 1014.21 L519.29 1012.78 L519.03 1012.68 L517.83 1013.49 L516.51 1012.17 L517.32 1010.97 L517.22 1010.71 L515.79 1010.44 L515.79 1008.56 L517.22 1008.29 L517.32 1008.03 L516.51 1006.83 L517.83 1005.51 L519.03 1006.32 L519.29 1006.22 L519.56 1004.79 L521.44 1004.79 L521.71 1006.22 L521.97 1006.32 L523.17 1005.51 L524.49 1006.83 L523.68 1008.03 Z" fill="#e8f0f8" stroke="#020407" stroke-width="0.6"/><circle cx="520.5" cy="1009.5" r="1.8" fill="#020407"/></svg>
<div style="left:248.5px;top:1022px;width:40.0px;height:2px;background:#76b9ed;"></div>
<div style="left:298px;top:1022px;width:40px;height:2px;background:#76b9ed;"></div>
<div style="left:346.5px;top:1022px;width:40.0px;height:2px;background:#76b9ed;"></div>
<div style="left:396px;top:1022px;width:40px;height:2px;background:#76b9ed;"></div>
<div style="left:441px;top:1022px;width:46.5px;height:2px;background:#76b9ed;"></div>
<div style="left:494px;top:1022px;width:40px;height:2px;background:#76b9ed;"></div>
<svg style="left:1114px;top:994px" width="50" height="20" viewBox="1114 994 50 20"><rect x="1117.5" y="998.5" width="15" height="9.5" fill="none" stroke="#fff" stroke-width="1"/><rect x="1117.5" y="998.5" width="4.5" height="5" fill="#000" stroke="#fff" stroke-width="1"/><path d="M1119 1000.8 L1120.5 1002 L1121 1000.8" stroke="#fff" stroke-width="0.8" fill="none"/><path d="M1119.5 1004 L1119.5 1011" stroke="#fff" stroke-width="1"/><path d="M1125.5 1008 L1125.5 1010.5 M1122 1010.5 L1129 1010.5" stroke="#fff" stroke-width="1"/><path d="M1141.5 1001.5 L1143.5 1001.5 L1147 998.5 L1147 1009.5 L1143.5 1006.5 L1141.5 1006.5 Z" fill="none" stroke="#fff" stroke-width="1"/><circle cx="1152.4" cy="1007.5" r="4.6" fill="#e81123"/><path d="M1150.3 1005.4 L1154.5 1009.6 M1154.5 1005.4 L1150.3 1009.6" stroke="#fff" stroke-width="1"/></svg>
<span class="t" style="left:1179.40px;top:989.28px;font-size:12px;color:#fff;letter-spacing:-0.833px;">21:51</span>
<span class="t" style="left:1166.40px;top:1006.98px;font-size:12px;color:#fff;letter-spacing:-0.596px;">23.08.2017</span>
<svg style="left:1239px;top:996px" width="17" height="16" viewBox="0 0 17 16"><path d="M0.5 0.5 L16.5 0.5 L16.5 11.5 L11 11.5 L8.5 15 L6 11.5 L0.5 11.5 Z" fill="none" stroke="#fff"/></svg>
<div style="left:1275px;top:984px;width:1px;height:40px;background:#555;"></div>
<svg style="left:1174px;top:4px" width="14" height="22" viewBox="0 0 14 22"><path d="M1 1 L1 17 L5 13 L8 20 L11 19 L8 12.5 L12.5 12.5 Z" fill="#fff" stroke="#000" stroke-width="1"/></svg>
</body></html>
